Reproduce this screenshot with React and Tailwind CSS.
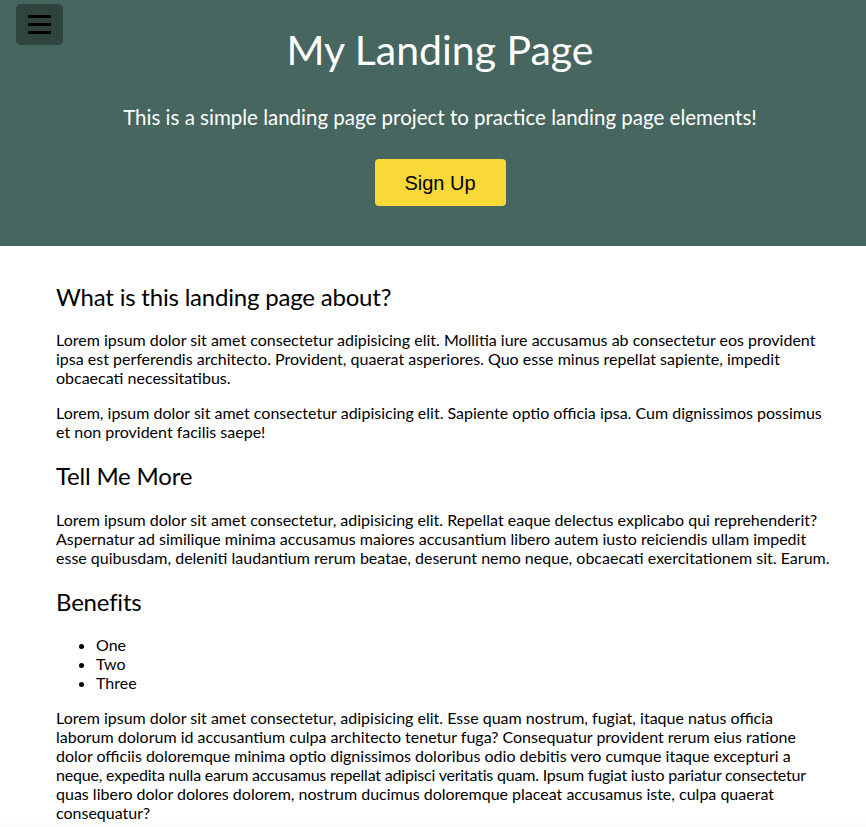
export default function App() {
  return (
    <div className="min-h-[827px] bg-white text-black font-['Lato',sans-serif] relative">
      <header className="bg-[#476660] h-[246px] flex flex-col items-center relative pl-[14px]">
        <button className="absolute left-[16px] top-[4px] w-[47px] h-[41px] rounded-[5px] bg-[#2f433f] flex flex-col items-center justify-center gap-[5px]">
          <span className="block w-[23px] h-[3px] bg-black"></span>
          <span className="block w-[23px] h-[3px] bg-black"></span>
          <span className="block w-[23px] h-[3px] bg-black"></span>
        </button>
        <h1 className="text-white text-[41px] leading-[48px] mt-[26px]">My Landing Page</h1>
        <p className="text-white text-[20.5px] leading-[24px] mt-[31px]">This is a simple landing page project to practice landing page elements!</p>
        <button className="mt-[30px] w-[131px] h-[47px] rounded-[4px] bg-[#f9d937] text-black text-[20px] font-['Liberation_Sans',Arial,sans-serif]">Sign Up</button>
      </header>
      <main className="pl-[56px] pr-[20px] pt-[36px] text-[16px] leading-[19px]">
        <h2 className="text-[24px] leading-[29px] tracking-[-0.2px]">What is this landing page about?</h2>
        <p className="mt-[19px]">Lorem ipsum dolor sit amet consectetur adipisicing elit. Mollitia iure accusamus ab consectetur eos provident<br />ipsa est perferendis architecto. Provident, quaerat asperiores. Quo esse minus repellat sapiente, impedit<br />obcaecati necessitatibus.</p>
        <p className="mt-[16px]">Lorem, ipsum dolor sit amet consectetur adipisicing elit. Sapiente optio officia ipsa. Cum dignissimos possimus<br />et non provident facilis saepe!</p>
        <h2 className="text-[24px] leading-[29px] tracking-[-0.2px] mt-[20px]">Tell Me More</h2>
        <p className="mt-[20px]">Lorem ipsum dolor sit amet consectetur, adipisicing elit. Repellat eaque delectus explicabo qui reprehenderit?<br />Aspernatur ad similique minima accusamus maiores accusantium libero autem iusto reiciendis ullam impedit<br />esse quibusdam, deleniti laudantium rerum beatae, deserunt nemo neque, obcaecati exercitationem sit. Earum.</p>
        <h2 className="text-[24px] leading-[29px] tracking-[-0.2px] mt-[20px]">Benefits</h2>
        <ul className="list-disc pl-[40px] mt-[19px]">
          <li>One</li>
          <li>Two</li>
          <li>Three</li>
        </ul>
        <p className="mt-[16px]">Lorem ipsum dolor sit amet consectetur, adipisicing elit. Esse quam nostrum, fugiat, itaque natus officia<br />laborum dolorum id accusantium culpa architecto tenetur fuga? Consequatur provident rerum eius ratione<br />dolor officiis doloremque minima optio dignissimos doloribus odio debitis vero cumque itaque excepturi a<br /><span className="tracking-[-0.2px]">neque, expedita nulla earum accusamus repellat adipisci veritatis quam. Ipsum fugiat iusto pariatur consectetur</span><br />quas libero dolor dolores dolorem, nostrum ducimus doloremque placeat accusamus iste, culpa quaerat<br />consequatur?</p>
      </main>
      <div className="h-[12px] bg-gradient-to-b from-white to-[#f2f2f2]"></div>
    </div>
  );
}
